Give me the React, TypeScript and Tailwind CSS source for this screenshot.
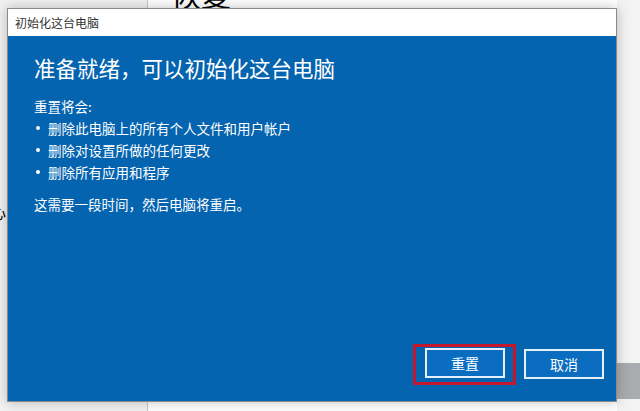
import React from "react";

const cjk = { fontFamily: '"Noto Sans CJK SC", "Noto Sans", sans-serif' };

const items = ["删除此电脑上的所有个人文件和用户帐户", "删除对设置所做的任何更改", "删除所有应用和程序"];

function ResetDialog() {
  return (
    <div className="absolute left-[7px] top-[8px] w-[610px] h-[394px] flex flex-col border border-[#8a8a8a] shadow-[0_0_12px_rgba(0,0,0,0.25)]">
      <div className="h-[27px] shrink-0 bg-white flex items-center pl-[7px] text-[12px] text-[#333]">
        初始化这台电脑
      </div>
      <div className="flex-1 bg-[#0564b0] text-white flex flex-col pl-[26px] pr-[12px] pb-[22px]">
        <h1 className="pt-[17px] text-[21.5px] leading-[30px] font-normal">
          准备就绪，可以初始化这台电脑
        </h1>
        <div className="mt-[12px] text-[13.5px] leading-[22px]">
          <div>重置将会:</div>
          <ul>
            {items.map((t) => (
              <li key={t} className="flex items-center">
                <span className="w-[4px] h-[4px] rounded-full bg-white ml-[2px] mr-[8px]" />
                <span>{t}</span>
              </li>
            ))}
          </ul>
          <div className="mt-[10px]">这需要一段时间，然后电脑将重启。</div>
        </div>
        <div className="mt-auto flex justify-end gap-[19px]">
          <div className="relative">
            <button className="w-[80px] h-[30px] border-2 border-[#e6eef7] bg-[#0a6dbf] text-[14px] text-white">
              重置
            </button>
            <span className="absolute -left-[12px] -top-[4px] -right-[11px] -bottom-[6px] border-[3px] border-[#c3172c]" />
          </div>
          <button className="w-[80px] h-[30px] mt-[1px] border-2 border-[#e6eef7] bg-[#0a6dbf] text-[14px] text-white">
            取消
          </button>
        </div>
      </div>
    </div>
  );
}

export default function App() {
  return (
    <div className="relative w-[640px] h-[411px] overflow-hidden bg-white" style={cjk}>
      <div className="flex h-full">
        <div className="w-[148px] shrink-0 h-full bg-[#f2f2f2] border-r border-[#c8c8c8] overflow-hidden">
          <div className="mt-[200px] -ml-[10px] text-[16px] leading-[24px] text-black">心</div>
        </div>
        <div className="flex-1 h-full bg-white overflow-hidden">
          <div className="-mt-[22px] ml-[23px] text-[30px] leading-[30px] text-black">恢复</div>
        </div>
        <div className="w-[23px] shrink-0 h-full bg-[#f3f3f3] flex flex-col">
          <div className="mt-auto mb-[12px] h-[36px] bg-[#a9acae]" />
        </div>
      </div>
      <ResetDialog />
    </div>
  );
}
